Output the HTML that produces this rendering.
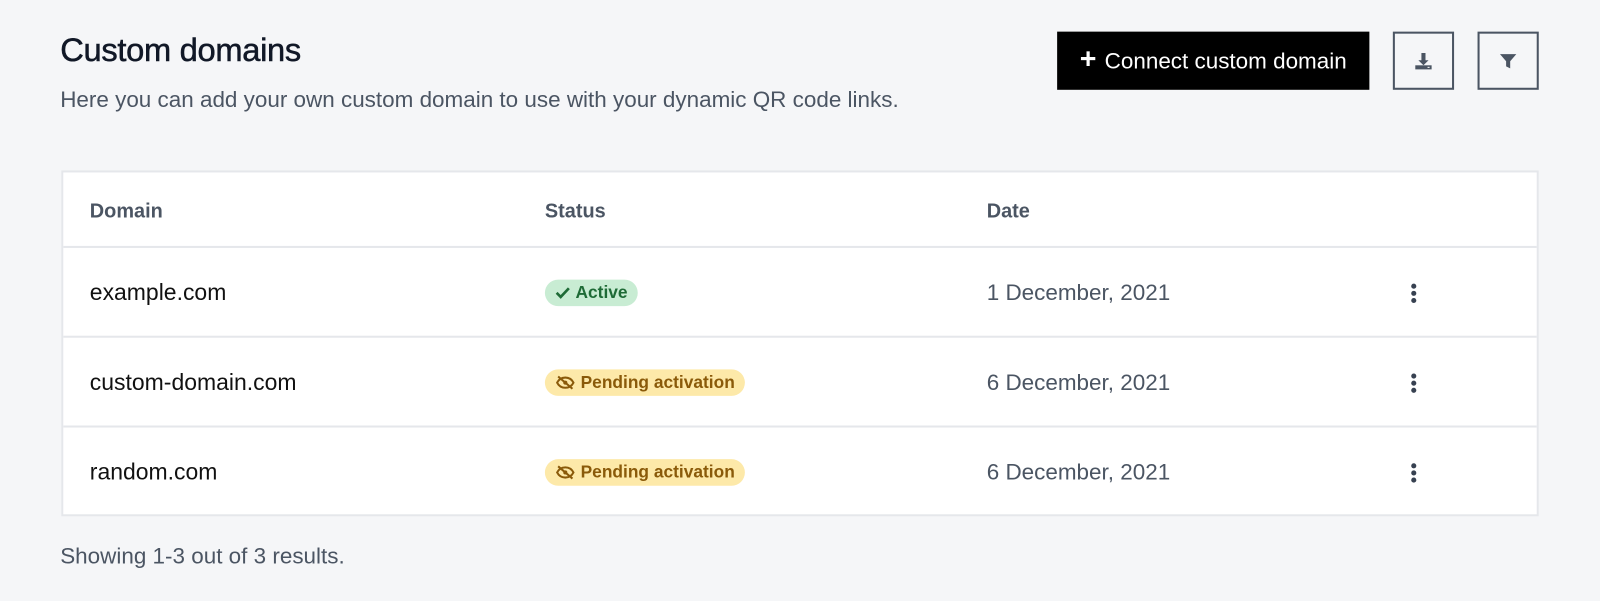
<!DOCTYPE html>
<html><head><meta charset="utf-8"><style>
*{box-sizing:border-box;margin:0;padding:0}
body{width:1600px;height:601px;background:#f5f6f8;font-family:"Liberation Sans",sans-serif;position:relative;overflow:hidden}
#w{position:absolute;left:0;top:0;width:1568px;height:589px;transform:scale(1.0204);transform-origin:0 0}
.a{position:absolute}
h1{position:absolute;left:59px;top:31px;font-size:32px;font-weight:400;color:#111827;letter-spacing:-0.3px;-webkit-text-stroke:0.5px #111827}
.sub{left:59px;top:85px;font-size:22px;color:#4b5563}
.btn{left:1036px;top:31px;width:306px;height:57px;background:#000;color:#fff;font-size:22px;display:flex;align-items:center;justify-content:center;gap:8px}
.ib{top:31px;width:60px;height:57px;border:2px solid #4b5563;display:flex;align-items:center;justify-content:center}
.tbl{left:60px;top:167px;width:1448px;height:339px;background:#fff;border:2px solid #e5e7eb}
.row{position:absolute;left:0;width:1444px;border-top:2px solid #e5e7eb}
.th{font-weight:700;font-size:19.5px;color:#4b5563}
.td{font-size:22.5px;color:#111}
.dt{font-size:22px;color:#4b5563}
.badge{display:inline-flex;align-items:center;gap:5px;height:26px;border-radius:13px;padding:0 10px;font-size:17px;font-weight:700}
.foot{left:59px;top:532px;font-size:22px;color:#4b5563}
.dots{width:6px}
.dots i{display:block;width:5px;height:5px;border-radius:50%;background:#374151;margin:2px 0}
</style></head><body><div id="w">
<h1>Custom domains</h1>
<div class="a sub">Here you can add your own custom domain to use with your dynamic QR code links.</div>
<div class="a btn"><span style="font-size:28px;font-weight:700;line-height:1;margin-top:-3px">+</span>Connect custom domain</div>
<div class="a ib" style="left:1365px"><svg width="20" height="20" viewBox="0 0 20 20"><path d="M8 2h4v7h3l-5 5-5-5h3z" fill="#4b5563"/><rect x="2" y="14" width="16" height="4" fill="#4b5563"/><rect x="14" y="15.5" width="2" height="1" fill="#fff"/></svg></div>
<div class="a ib" style="left:1448px"><svg width="20" height="20" viewBox="0 0 20 20"><path d="M2 3h16l-6 7v7l-4-2v-5z" fill="#4b5563"/></svg></div>
<div class="a tbl">
 <div class="a th" style="left:26px;top:27px">Domain</div>
 <div class="a th" style="left:472px;top:27px">Status</div>
 <div class="a th" style="left:905px;top:27px">Date</div>
 <div class="row" style="top:72px;height:88px">
  <div class="a td" style="left:26px;top:31px">example.com</div>
  <div class="a" style="left:472px;top:31px"><span class="badge" style="background:#c8ecd3;color:#1e6b36"><svg width="15" height="12" viewBox="0 0 15 12"><path d="M1.5 6l4 4 8-8.5" stroke="#1e6b36" stroke-width="2.6" fill="none"/></svg>Active</span></div>
  <div class="a dt" style="left:905px;top:31px">1 December, 2021</div>
  <div class="a dots" style="left:1321px;top:33px"><i></i><i></i><i></i></div>
 </div>
 <div class="row" style="top:160px;height:88px">
  <div class="a td" style="left:26px;top:31px">custom-domain.com</div>
  <div class="a" style="left:472px;top:31px"><span class="badge" style="background:#fde9a9;color:#8a5a0a"><svg width="20" height="14" viewBox="0 0 20 14"><path d="M2 7c2-4 5-5 8-5s6 1 8 5c-2 4-5 5-8 5s-6-1-8-5z" stroke="#8a5a0a" stroke-width="2" fill="none"/><circle cx="10" cy="7" r="2" fill="#8a5a0a"/><path d="M3 1l14 12" stroke="#8a5a0a" stroke-width="2"/></svg>Pending activation</span></div>
  <div class="a dt" style="left:905px;top:31px">6 December, 2021</div>
  <div class="a dots" style="left:1321px;top:33px"><i></i><i></i><i></i></div>
 </div>
 <div class="row" style="top:248px;height:88px">
  <div class="a td" style="left:26px;top:31px">random.com</div>
  <div class="a" style="left:472px;top:31px"><span class="badge" style="background:#fde9a9;color:#8a5a0a"><svg width="20" height="14" viewBox="0 0 20 14"><path d="M2 7c2-4 5-5 8-5s6 1 8 5c-2 4-5 5-8 5s-6-1-8-5z" stroke="#8a5a0a" stroke-width="2" fill="none"/><circle cx="10" cy="7" r="2" fill="#8a5a0a"/><path d="M3 1l14 12" stroke="#8a5a0a" stroke-width="2"/></svg>Pending activation</span></div>
  <div class="a dt" style="left:905px;top:31px">6 December, 2021</div>
  <div class="a dots" style="left:1321px;top:33px"><i></i><i></i><i></i></div>
 </div>
</div>
<div class="a foot">Showing 1-3 out of 3 results.</div>
</div></body></html>
